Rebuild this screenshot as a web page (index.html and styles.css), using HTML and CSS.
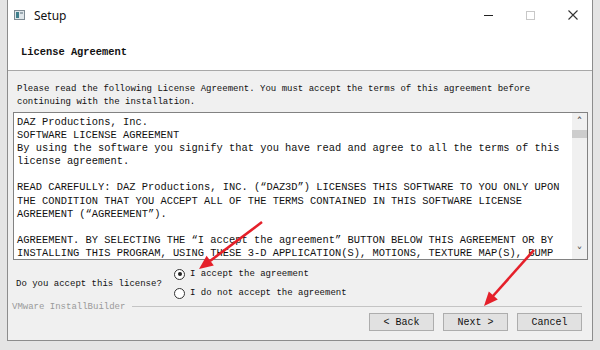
FILE: index.html
```html
<!DOCTYPE html>
<html lang="en">
<head>
  <meta charset="UTF-8">
  <title>Setup</title>
  <link rel="stylesheet" href="styles.css">
</head>
<body>
  <!-- Installer window -->
  <div class="window">
    <div class="titlebar">
      <svg class="app-icon" width="11" height="10" viewBox="0 0 11 10">
        <rect x="0.5" y="0.5" width="10" height="9" fill="#dfe6ea" stroke="#7d8a92"/>
        <rect x="2" y="2" width="3" height="6" fill="#3f7f8c"/>
        <rect x="6" y="2" width="3" height="2" fill="#9aa8b0"/>
      </svg>
      <span class="title">Setup</span>
      <div class="controls">
        <span class="ctl min"></span>
        <span class="ctl max"></span>
        <svg class="ctl close" width="10" height="10" viewBox="0 0 10 10">
          <path d="M0.5 0.5 L9.5 9.5 M9.5 0.5 L0.5 9.5" stroke="#333" stroke-width="1.1"/>
        </svg>
      </div>
    </div>
    <div class="header">License Agreement</div>

    <div class="content">
      <p class="intro">Please read the following License Agreement. You must accept the terms of this agreement before<br>continuing with the installation.</p>
      <div class="textbox">
        <pre class="license">DAZ Productions, Inc.
SOFTWARE LICENSE AGREEMENT
By using the software you signify that you have read and agree to all the terms of this
license agreement.

READ CAREFULLY: DAZ Productions, INC. (“DAZ3D”) LICENSES THIS SOFTWARE TO YOU ONLY UPON
THE CONDITION THAT YOU ACCEPT ALL OF THE TERMS CONTAINED IN THIS SOFTWARE LICENSE
AGREEMENT (“AGREEMENT”).

AGREEMENT. BY SELECTING THE “I accept the agreement” BUTTON BELOW THIS AGREEMENT OR BY
INSTALLING THIS PROGRAM, USING THESE 3-D APPLICATION(S), MOTIONS, TEXTURE MAP(S), BUMP</pre>
        <div class="scrollbar">
          <span class="arrow up">&#710;</span>
          <span class="thumb"></span>
          <span class="track"></span>
          <span class="arrow down">&#711;</span>
        </div>
      </div>

      <div class="accept">
        <span class="question">Do you accept this license?</span>
        <div class="radios">
          <label class="radio"><span class="dot checked"></span>I accept the agreement</label>
          <label class="radio"><span class="dot"></span>I do not accept the agreement</label>
        </div>
      </div>
    </div>

    <div class="brand"><span>VMware InstallBuilder</span><span class="rule"></span></div>
    <div class="buttons">
      <button class="btn">&lt; Back</button>
      <button class="btn">Next &gt;</button>
      <button class="btn">Cancel</button>
    </div>
  </div>

  <!-- red annotation arrows -->
  <svg class="arrows" width="600" height="350" viewBox="0 0 600 350">
    <line x1="262" y1="222" x2="210" y2="261" stroke="#e5202a" stroke-width="2.6"/>
    <polygon points="199,269 213.8,265.4 206.6,255.8" fill="#e5202a"/>
    <line x1="534" y1="250" x2="493" y2="296" stroke="#e5202a" stroke-width="2.6"/>
    <polygon points="484,306 497.8,299.5 488.8,291.5" fill="#e5202a"/>
  </svg>
</body>
</html>
```

FILE: styles.css
```css
body, html {
  margin: 0; padding: 0;
  background: #e4e4e4;
  height: 100%; overflow: hidden; color: #111;
}
body { position: relative; }
.window {
  margin-left: 7px; width: 584px; height: 340px;
  border: 1px solid #8c8c8c; border-top: none;
  background: #f0f0f0;
  display: flex; flex-direction: column;
  font-family: "Liberation Mono", "DejaVu Sans Mono", monospace;
}
/* Titelzeile */
.titlebar {
  height: 30px; background: #fff;
  display: flex; align-items: center; padding-left: 6px;
}
.app-icon { margin-right: 9px; margin-top: -1px; }
.title { font-family: "Noto Sans", sans-serif; font-size: 12px; color: #111; }
.controls { margin-left: auto; display: flex; align-items: center; height: 100%; }
.ctl { display: block; }
.min { width: 9px; height: 1px; background: #222; margin-right: 33px; }
.max { width: 7px; height: 7px; border: 1px solid #c8c8c8; margin-right: 33px; }
.close { margin-right: 14px; }
.header {
  height: 41px; background: #fff; border-bottom: 1px solid #a8a8a8; box-sizing: border-box;
  font-weight: bold; font-size: 10.4px; padding: 3px 0 0 13px;
  display: flex; align-items: center;
}
/* Inhalt */
.content { padding: 12px 4px 0 5px; }
.intro {
  margin: 0 0 3px 4px; font-size: 9px; line-height: 13px; color: #111;
}
.textbox {
  height: 146px; border: 1px solid #828282; background: #fff;
  display: flex; overflow: hidden;
}
.license {
  flex: 1; margin: 0; padding: 3px 0 0 3px; overflow: hidden;
  font-family: "Liberation Mono", monospace; font-size: 10.4px; line-height: 13.1px; color: #111;
}
.scrollbar {
  width: 15px; background: #f0f0f0; display: flex; flex-direction: column; align-items: center;
}
.arrow { font-size: 12px; line-height: 14px; height: 14px; color: #555; font-family: "DejaVu Sans", sans-serif; }
.arrow.up { margin-top: 3px; }
.arrow.down { margin-bottom: 2px; line-height: 20px; }
.thumb { width: 15px; height: 8px; background: #cdcdcd; }
.track { flex: 1; }
.accept { display: flex; align-items: center; height: 35px; margin-top: 6px; }
.question { font-size: 9px; margin-left: 3px; width: 158px; padding-top: 1px; }
.radios { display: flex; flex-direction: column; gap: 7px; }
.radio { display: flex; align-items: center; font-size: 9px; line-height: 12px; }
.dot {
  width: 11px; height: 11px; border: 1px solid #333; border-radius: 50%;
  box-sizing: border-box; margin-right: 5px; background: #fff; position: relative;
}
.dot.checked::after {
  content: ""; position: absolute; left: 2.5px; top: 2.5px;
  width: 4px; height: 4px; border-radius: 50%; background: #222;
}
/* Fusszeile */
.brand {
  display: flex; align-items: center; height: 12px;
  font-size: 9px; color: #9a9a9a; padding: 0 10px 0 4px;
}
.rule { flex: 1; height: 1px; background: #c4c4c4; margin-left: 7px; margin-top: -1px; }
.buttons { display: flex; justify-content: flex-end; gap: 9px; padding: 0 10px 0 0; }
.btn {
  width: 65px; height: 18px; padding: 0;
  background: #e1e1e1; border: 1px solid #adadad;
  font-family: "Liberation Mono", monospace; font-size: 10px; color: #111;
}
.arrows { position: absolute; left: 0; top: 0; pointer-events: none; }
```
